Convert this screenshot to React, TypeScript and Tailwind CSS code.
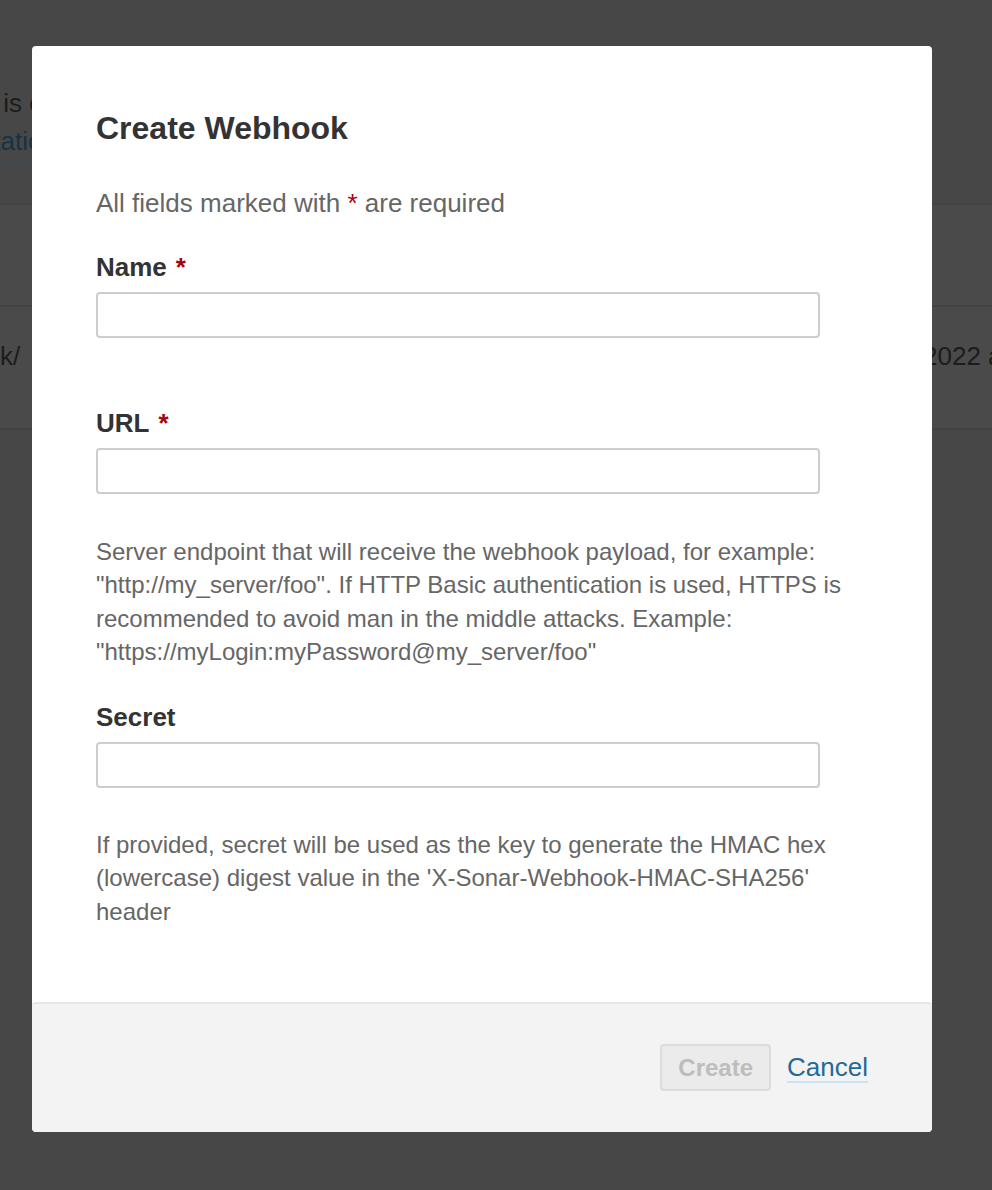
export default function App() {
  return (
    <div className="relative h-screen w-full overflow-hidden bg-[#474747] font-['Liberation_Sans',Arial,sans-serif]">
      {/* page behind the overlay */}
      <div className="pt-[88px] text-[26px] leading-[30px] text-[#1c1c1c]">
        <p className="-ml-[98px] whitespace-nowrap">analysis is completed. An HTTP POST request is sent</p>
        <p className="-ml-[118px] mt-[8px] whitespace-nowrap">
          <span className="inline-block border-b-2 border-[#3e4a52] pb-[7px] text-[#173246]">Documentation</span>
        </p>
      </div>
      <div className="mt-[38px] border-y-2 border-[#434343] bg-[#4a4a4a]">
        <div className="h-[100px]" />
        <div className="grid h-[123px] grid-cols-[845px_1fr] border-t-2 border-[#434343] pt-[32px] text-[26px] leading-[34px] text-[#1c1c1c]">
          <div className="-ml-[91px] whitespace-nowrap">webhook/</div>
          <div className="whitespace-nowrap">Jun 7, 2022 at 3:41 PM</div>
        </div>
      </div>

      {/* modal */}
      <div className="absolute inset-0">
        <div className="ml-[32px] mt-[46px] w-[900px] overflow-hidden rounded-[4px] bg-white">
          <div className="px-[64px] pb-[74px] pt-[62px]">
            <h2 className="text-[32px] font-bold leading-[40px] text-[#333]">Create Webhook</h2>
            <p className="mt-[38px] text-[26px] leading-[34px] text-[#666]">
              All fields marked with <em className="not-italic text-[#a4030f]">*</em> are required
            </p>

            <Field label="Name" required className="mt-[30px]" />
            <Field label="URL" required className="mt-[68px]" />
            <p className="mt-[41px] text-[24px] leading-[33.25px] text-[#666]">
              Server endpoint that will receive the webhook payload, for example: "http://my_server/foo". If
              HTTP Basic authentication is used, HTTPS is recommended to avoid man in the middle attacks.
              Example: "https://myLogin:myPassword@my_server/foo"
            </p>

            <Field label="Secret" className="mt-[32px]" />
            <p className="mt-[40px] text-[24px] leading-[33.25px] text-[#666]">
              If provided, secret will be used as the key to generate the HMAC hex (lowercase) digest value in
              the 'X-Sonar-Webhook-HMAC-SHA256' header
            </p>
          </div>

          <footer className="flex h-[130px] items-center justify-end gap-[16px] rounded-[4px] border-t-2 border-[#e6e6e6] bg-[#f3f3f3] px-[64px]">
            <button
              disabled
              className="h-[47px] rounded-[4px] border-2 border-[#dcdcdc] bg-[#ebebeb] px-[16px] text-[24px] font-bold text-[#bdbdbd]"
            >
              Create
            </button>
            <a href="#" className="inline-block border-b-2 border-[#cae3f2] text-[26px] leading-[28px] text-[#236a97]">
              Cancel
            </a>
          </footer>
        </div>
      </div>
    </div>
  )
}

function Field({
  label,
  required,
  className,
}: {
  label: string
  required?: boolean
  className?: string
}) {
  return (
    <div className={className}>
      <label className="block text-[26px] font-bold leading-[34px] text-[#333]">
        {label}
        {required && <em className="ml-[9px] not-italic text-[#a4030f]">*</em>}
      </label>
      <input
        type="text"
        className="mt-[8px] block h-[46px] w-[724px] rounded-[4px] border-2 border-[#cdcdcd] bg-white px-[12px] text-[26px] outline-none"
      />
    </div>
  )
}
